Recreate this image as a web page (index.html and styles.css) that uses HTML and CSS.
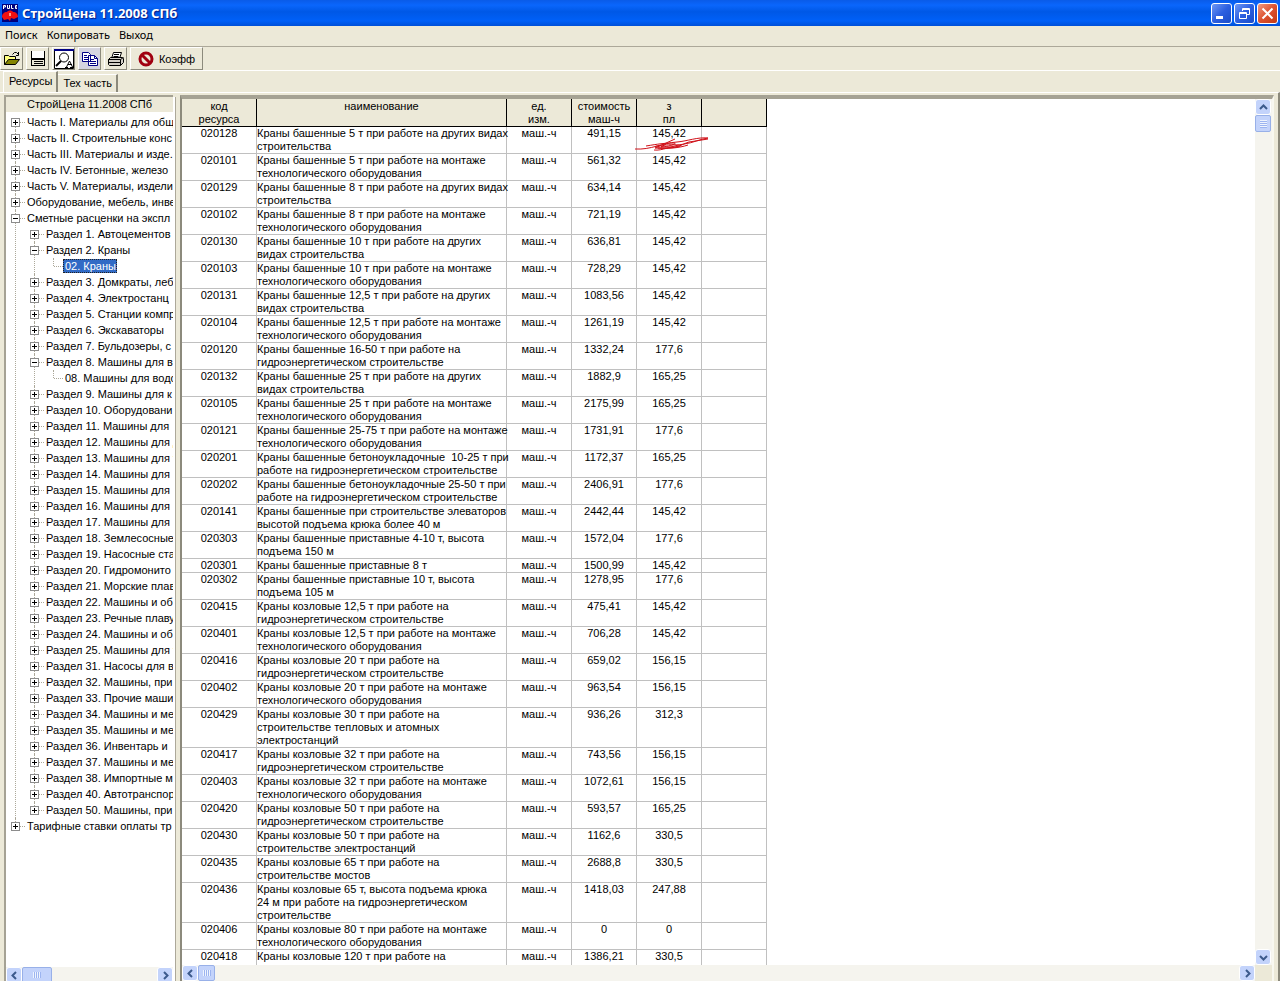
FILE: index.html
```html
<!DOCTYPE html>
<html lang="ru">
<head>
<meta charset="utf-8">
<title>СтройЦена 11.2008 СПб</title>
<link rel="stylesheet" href="styles.css">
</head>
<body>
<div class="window">
<header class="titlebar">
<svg class="logo" width="16" height="18" viewBox="0 0 16 18"><path fill="#00007c" d="M0 0h16v18H0z"/><path stroke="#fff" fill="none" d="M1.500 5V1.500h2V3h-2M5.500 1v3.500h2V1M9.500 1v3.500h2M15 1.500h-1.500v3H15M13 3h2"/><path fill="#f01010" d="M0 13c0-3 2-5 5-5 1-2 5-2 6 0 3 0 5 2 5 5l-4 2-3-1-1 3-2-2-4 1z"/><path fill="#ff9a80" d="M7 9h2v3H7z"/></svg>
<h1 class="title">СтройЦена 11.2008 СПб</h1>
<div class="caption-buttons">
<button class="cap" aria-label="Свернуть"><svg width="19" height="19" viewBox="0 0 19 19"><path fill="#fff" d="M4 12h7v3H4z"/></svg></button>
<button class="cap" aria-label="Восстановить"><svg width="19" height="19" viewBox="0 0 19 19"><path fill="none" stroke="#fff" d="M7.500 7V4.500h7v6H12M7 5.500h8M4.500 8.500h7v6h-7zM4 9.500h8"/></svg></button>
<button class="cap close" aria-label="Закрыть"><svg width="19" height="19" viewBox="0 0 19 19"><path stroke="#fff" stroke-width="2" d="M4.500 4.500l10 10M14.500 4.500l-10 10"/></svg></button>
</div>
</header>
<nav class="menubar"><button>Поиск</button><button>Копировать</button><button>Выход</button></nav>
<div class="toolbar">
<button class="tool" aria-label="Открыть"><svg width="18" height="16" viewBox="0 0 18 16"><path fill="#ffff80" stroke="#000" d="M1.500 13.500v-9h4l1 1h6v3"/><path fill="#848400" stroke="#000" d="M1.500 13.500l4-5h11l-4 5z"/><path fill="none" stroke="#000" d="M9.500 3.500l2-2h2l2 2M15.500 1v3.500H13"/></svg></button>
<button class="tool" aria-label="Сохранить"><svg width="16" height="16" viewBox="0 0 16 16"><path fill="#fff" d="M2 0h12v8H2z"/><path d="M1 0h1v15H1zM14 0h1v15h-1zM1 7h14v2H1zM4 10h9v1H4zM4 12h9v1H4zM1 14h14v1H1z"/></svg></button>
<button class="tool preview" aria-label="Просмотр"><svg width="20" height="20" viewBox="0 0 20 20"><path fill="#fff" stroke="#000" d="M.5.5h19v19H.5z"/><path fill="#000084" d="M0 0h20v2H0z"/><circle cx="10" cy="8.500" r="4.500" fill="#fff" stroke="#000"/><path stroke="#000" stroke-width="2" d="M7 12l-5 5"/><path fill="none" stroke="#000" d="M12.500 18l3-6 3 6M14 15.500h4M11 18.500h3M16 18.500h4"/></svg></button>
<button class="tool copy" aria-label="Копировать"><svg width="18" height="16" viewBox="0 0 18 16"><path fill="#fff" stroke="#000084" d="M1.500 1.500h6l2 2v7h-8zM7.500 4.500h6l3 3v7h-9z"/><path fill="none" stroke="#000084" d="M3 4.500h3M3 6.500h4M3 8.500h4M9 8.500h4M9 10.500h6M9 12.500h6M13.500 4.500v3h3"/></svg></button>
<button class="tool" aria-label="Печать"><svg width="18" height="16" viewBox="0 0 18 16"><path fill="#fff" stroke="#000" d="M4.500 7.500l2-6h8l-2 6"/><path fill="#d4d0c8" stroke="#000" d="M1.500 8.500l2-2h12l1 1v4l-3 3h-11l-1-1zM1.500 8.500h12v6M13.500 8.500l3-2M2 11.500h11M7 3.500h5M6.500 5.500h5"/></svg></button>
<button class="tool coeff"><svg width="16" height="16" viewBox="0 0 16 16"><circle cx="8" cy="8" r="6" fill="none" stroke="#a00010" stroke-width="3"/><path stroke="#a00010" stroke-width="3" d="M4 4l8 8"/></svg><span>Коэфф</span></button>
</div>
<div class="tabs" role="tablist"><button class="tab active" role="tab" aria-selected="true">Ресурсы</button><button class="tab" role="tab" aria-selected="false">Тех часть</button></div>
<main class="workspace">
<aside class="side">
<h2 class="side-head">СтройЦена 11.2008 СПб</h2>
<ul class="tree">
<li><i class="box plus"></i>Часть I. Материалы для общ</li>
<li><i class="box plus"></i>Часть II. Строительные конс</li>
<li><i class="box plus"></i>Часть III. Материалы и изде.</li>
<li><i class="box plus"></i>Часть IV. Бетонные, железо</li>
<li><i class="box plus"></i>Часть V. Материалы, издели</li>
<li><i class="box plus"></i>Оборудование, мебель, инве</li>
<li><i class="box"></i>Сметные расценки на экспл
<ul>
<li><i class="box plus"></i>Раздел 1. Автоцементов</li>
<li><i class="box"></i>Раздел 2. Краны
<ul class="leaf"><li><span class="selected">02. Краны</span></li></ul></li>
<li><i class="box plus"></i>Раздел 3. Домкраты, леб</li>
<li><i class="box plus"></i>Раздел 4. Электростанц</li>
<li><i class="box plus"></i>Раздел 5. Станции компр</li>
<li><i class="box plus"></i>Раздел 6. Экскаваторы</li>
<li><i class="box plus"></i>Раздел 7. Бульдозеры, с</li>
<li><i class="box"></i>Раздел 8. Машины для в
<ul class="leaf"><li>08. Машины для водо</li></ul></li>
<li><i class="box plus"></i>Раздел 9. Машины для к</li>
<li><i class="box plus"></i>Раздел 10. Оборудовани</li>
<li><i class="box plus"></i>Раздел 11. Машины для</li>
<li><i class="box plus"></i>Раздел 12. Машины для д</li>
<li><i class="box plus"></i>Раздел 13. Машины для т</li>
<li><i class="box plus"></i>Раздел 14. Машины для</li>
<li><i class="box plus"></i>Раздел 15. Машины для</li>
<li><i class="box plus"></i>Раздел 16. Машины для</li>
<li><i class="box plus"></i>Раздел 17. Машины для</li>
<li><i class="box plus"></i>Раздел 18. Землесосные</li>
<li><i class="box plus"></i>Раздел 19. Насосные ста</li>
<li><i class="box plus"></i>Раздел 20. Гидромонито</li>
<li><i class="box plus"></i>Раздел 21. Морские плав</li>
<li><i class="box plus"></i>Раздел 22. Машины и об</li>
<li><i class="box plus"></i>Раздел 23. Речные плаву</li>
<li><i class="box plus"></i>Раздел 24. Машины и об</li>
<li><i class="box plus"></i>Раздел 25. Машины для т</li>
<li><i class="box plus"></i>Раздел 31. Насосы для в</li>
<li><i class="box plus"></i>Раздел 32. Машины, при</li>
<li><i class="box plus"></i>Раздел 33. Прочие маши</li>
<li><i class="box plus"></i>Раздел 34. Машины и ме</li>
<li><i class="box plus"></i>Раздел 35. Машины и ме</li>
<li><i class="box plus"></i>Раздел 36. Инвентарь и</li>
<li><i class="box plus"></i>Раздел 37. Машины и ме</li>
<li><i class="box plus"></i>Раздел 38. Импортные м</li>
<li><i class="box plus"></i>Раздел 40. Автотранспор</li>
<li><i class="box plus"></i>Раздел 50. Машины, при</li>
</ul></li>
<li><i class="box plus"></i>Тарифные ставки оплаты тр</li>
</ul>
<div class="hscroll">
<button class="arrow" aria-label="Влево"><svg width="9" height="9" viewBox="0 0 9 9"><path d="M6 1L2.500 4.500 6 8"/></svg></button><span class="thumb wide"></span><span class="space"></span><button class="arrow" aria-label="Вправо"><svg width="9" height="9" viewBox="0 0 9 9"><path d="M3 1l3.500 3.500L3 8"/></svg></button>
</div>
</aside>
<div class="splitter"></div>
<section class="data">
<div class="view">
<div class="sheet">
<table class="grid">
<colgroup><col class="c-code"><col class="c-name"><col class="c-num"><col class="c-num"><col class="c-num"><col class="c-num"></colgroup>
<thead><tr><th>код<br>ресурса</th><th>наименование</th><th>ед.<br>изм.</th><th>стоимость<br>маш-ч</th><th>з<br>пл</th><th></th></tr></thead>
<tbody>
<tr><td>020128</td><td>Краны башенные 5 т при работе на других видах<br>строительства</td><td>маш.-ч</td><td>491,15</td><td class="marked">145,42<svg class="scribble" width="76" height="16" viewBox="0 0 76 16"><path d="M1 13c16 1 27-6 42-7 11-1 20-5 31-4-8 1-15 5-24 6-13 2-22 7-30 6M12 10c12-2 19-3 27-3s-8 5-16 4 14-3 22-2-11 4-21 3M41 3L21 12c13 1 24 0 33-3M32 8l-5 3h14c6-1 10-4 14-5L74 3"/></svg></td><td></td></tr>
<tr><td>020101</td><td>Краны башенные 5 т при работе на монтаже<br>технологического оборудования</td><td>маш.-ч</td><td>561,32</td><td>145,42</td><td></td></tr>
<tr><td>020129</td><td>Краны башенные 8 т при работе на других видах<br>строительства</td><td>маш.-ч</td><td>634,14</td><td>145,42</td><td></td></tr>
<tr><td>020102</td><td>Краны башенные 8 т при работе на монтаже<br>технологического оборудования</td><td>маш.-ч</td><td>721,19</td><td>145,42</td><td></td></tr>
<tr><td>020130</td><td>Краны башенные 10 т при работе на других<br>видах строительства</td><td>маш.-ч</td><td>636,81</td><td>145,42</td><td></td></tr>
<tr><td>020103</td><td>Краны башенные 10 т при работе на монтаже<br>технологического оборудования</td><td>маш.-ч</td><td>728,29</td><td>145,42</td><td></td></tr>
<tr><td>020131</td><td>Краны башенные 12,5 т при работе на других<br>видах строительства</td><td>маш.-ч</td><td>1083,56</td><td>145,42</td><td></td></tr>
<tr><td>020104</td><td>Краны башенные 12,5 т при работе на монтаже<br>технологического оборудования</td><td>маш.-ч</td><td>1261,19</td><td>145,42</td><td></td></tr>
<tr><td>020120</td><td>Краны башенные 16-50 т при работе на<br>гидроэнергетическом строительстве</td><td>маш.-ч</td><td>1332,24</td><td>177,6</td><td></td></tr>
<tr><td>020132</td><td>Краны башенные 25 т при работе на других<br>видах строительства</td><td>маш.-ч</td><td>1882,9</td><td>165,25</td><td></td></tr>
<tr><td>020105</td><td>Краны башенные 25 т при работе на монтаже<br>технологического оборудования</td><td>маш.-ч</td><td>2175,99</td><td>165,25</td><td></td></tr>
<tr><td>020121</td><td>Краны башенные 25-75 т при работе на монтаже<br>технологического оборудования</td><td>маш.-ч</td><td>1731,91</td><td>177,6</td><td></td></tr>
<tr><td>020201</td><td>Краны башенные бетоноукладочные&nbsp; 10-25 т при<br>работе на гидроэнергетическом строительстве</td><td>маш.-ч</td><td>1172,37</td><td>165,25</td><td></td></tr>
<tr><td>020202</td><td>Краны башенные бетоноукладочные 25-50 т при<br>работе на гидроэнергетическом строительстве</td><td>маш.-ч</td><td>2406,91</td><td>177,6</td><td></td></tr>
<tr><td>020141</td><td>Краны башенные при строительстве элеваторов<br>высотой подъема крюка более 40 м</td><td>маш.-ч</td><td>2442,44</td><td>145,42</td><td></td></tr>
<tr><td>020303</td><td>Краны башенные приставные 4-10 т, высота<br>подъема 150 м</td><td>маш.-ч</td><td>1572,04</td><td>177,6</td><td></td></tr>
<tr><td>020301</td><td>Краны башенные приставные 8 т</td><td>маш.-ч</td><td>1500,99</td><td>145,42</td><td></td></tr>
<tr><td>020302</td><td>Краны башенные приставные 10 т, высота<br>подъема 105 м</td><td>маш.-ч</td><td>1278,95</td><td>177,6</td><td></td></tr>
<tr><td>020415</td><td>Краны козловые 12,5 т при работе на<br>гидроэнергетическом строительстве</td><td>маш.-ч</td><td>475,41</td><td>145,42</td><td></td></tr>
<tr><td>020401</td><td>Краны козловые 12,5 т при работе на монтаже<br>технологического оборудования</td><td>маш.-ч</td><td>706,28</td><td>145,42</td><td></td></tr>
<tr><td>020416</td><td>Краны козловые 20 т при работе на<br>гидроэнергетическом строительстве</td><td>маш.-ч</td><td>659,02</td><td>156,15</td><td></td></tr>
<tr><td>020402</td><td>Краны козловые 20 т при работе на монтаже<br>технологического оборудования</td><td>маш.-ч</td><td>963,54</td><td>156,15</td><td></td></tr>
<tr><td>020429</td><td>Краны козловые 30 т при работе на<br>строительстве тепловых и атомных<br>электростанций</td><td>маш.-ч</td><td>936,26</td><td>312,3</td><td></td></tr>
<tr><td>020417</td><td>Краны козловые 32 т при работе на<br>гидроэнергетическом строительстве</td><td>маш.-ч</td><td>743,56</td><td>156,15</td><td></td></tr>
<tr><td>020403</td><td>Краны козловые 32 т при работе на монтаже<br>технологического оборудования</td><td>маш.-ч</td><td>1072,61</td><td>156,15</td><td></td></tr>
<tr><td>020420</td><td>Краны козловые 50 т при работе на<br>гидроэнергетическом строительстве</td><td>маш.-ч</td><td>593,57</td><td>165,25</td><td></td></tr>
<tr><td>020430</td><td>Краны козловые 50 т при работе на<br>строительстве электростанций</td><td>маш.-ч</td><td>1162,6</td><td>330,5</td><td></td></tr>
<tr><td>020435</td><td>Краны козловые 65 т при работе на<br>строительстве мостов</td><td>маш.-ч</td><td>2688,8</td><td>330,5</td><td></td></tr>
<tr><td>020436</td><td>Краны козловые 65 т, высота подъема крюка<br>24 м при работе на гидроэнергетическом<br>строительстве</td><td>маш.-ч</td><td>1418,03</td><td>247,88</td><td></td></tr>
<tr><td>020406</td><td>Краны козловые 80 т при работе на монтаже<br>технологического оборудования</td><td>маш.-ч</td><td>0</td><td>0</td><td></td></tr>
<tr><td>020418</td><td>Краны козловые 120 т при работе на<br>&nbsp;</td><td>маш.-ч</td><td>1386,21</td><td>330,5</td><td></td></tr>
</tbody>
</table>
</div>
<div class="vscroll">
<button class="arrow" aria-label="Вверх"><svg width="9" height="9" viewBox="0 0 9 9"><path d="M1 6l3.500-3.500L8 6"/></svg></button><span class="thumb tall"></span><span class="space"></span><button class="arrow" aria-label="Вниз"><svg width="9" height="9" viewBox="0 0 9 9"><path d="M1 3l3.500 3.500L8 3"/></svg></button>
</div>
</div>
<div class="hscroll bottom">
<button class="arrow" aria-label="Влево"><svg width="9" height="9" viewBox="0 0 9 9"><path d="M6 1L2.500 4.500 6 8"/></svg></button><span class="thumb"></span><span class="space"></span><button class="arrow" aria-label="Вправо"><svg width="9" height="9" viewBox="0 0 9 9"><path d="M3 1l3.500 3.500L3 8"/></svg></button><span class="corner"></span>
</div>
</section>
</main>
</div>
</body>
</html>
```

FILE: styles.css
```css
* { box-sizing: border-box; }
body { margin: 0; font: 11px/13px "Liberation Sans", Arial, sans-serif; color: #000; background: #ece9d8; }
button { font: inherit; color: inherit; padding: 0; border: 0; background: none; }
h1, h2, ul { margin: 0; padding: 0; }
.window { height: 100vh; display: flex; flex-direction: column; overflow: hidden; }

.titlebar { flex: none; height: 26px; display: flex; align-items: center; padding: 0 2px; background: linear-gradient(#0a5be8 0, #0a66fc 20%, #0058e6 45%, #0060f8 80%, #0050d8 100%); }
.logo { margin-right: 4px; }
.title { flex: 1; font: bold 13px/20px "Noto Sans", sans-serif; color: #fff; text-shadow: 1px 1px 1px #0a1883; }
.caption-buttons { display: flex; gap: 2px; }
.cap { width: 21px; height: 21px; border: 1px solid #fff; border-radius: 3px; background: linear-gradient(135deg, #6f98f5, #2c5fe0 50%, #1a4cc8); }
.cap svg { display: block; }
.cap.close { background: linear-gradient(135deg, #f09a80, #dd5230 50%, #c23a14); }

.menubar { flex: none; height: 20px; display: flex; gap: 9px; padding: 0 5px 3px; font-family: "Noto Sans", sans-serif; }
.toolbar { flex: none; height: 25px; display: flex; gap: 3px; border-top: 1px solid #aca899; border-bottom: 1px solid #fff; }
.tool { width: 23px; display: flex; align-items: center; justify-content: center; border: 1px solid; border-color: #fff #8c8a7c #8c8a7c #fff; }
.tool svg { flex: none; }
.copy { background: #d4d4e0; }
.coeff { width: 73px; gap: 5px; padding-top: 1px; }

.tabs { flex: none; height: 21px; display: flex; align-items: flex-end; padding-left: 3px; }
.tab { height: 18px; padding: 0 4px 0 5px; border-right: 2px solid #8c8a7c; border-top: 1px solid #fff; }
.tab.active { height: 21px; border-left: 1px solid #fff; padding-bottom: 1px; }

.workspace { flex: 1; min-height: 0; display: flex; border-top: 1px solid #fff; border-right: 2px solid #8c8a7c; padding: 2px 4px 0 4px; }
.side { width: 169px; display: flex; flex-direction: column; border: 2px solid #a5a294; border-right: 0; border-bottom: 0; background: #fff; overflow: hidden; }
.side-head { flex: none; height: 15px; background: #ece9d8; text-align: center; font-size: 11px; font-weight: normal; line-height: 15px; }
.splitter { width: 7px; margin-top: 2px; border-left: 2px solid #fff; border-right: 3px solid #ece9d8; background: #aca899 content-box; padding-right: 1px; }
.tree { flex: 1; min-height: 0; overflow: hidden; margin-top: 2px; }
.tree, .tree ul { list-style: none; }
.tree li { line-height: 16px; padding-left: 21px; white-space: nowrap; position: relative; }
.tree ul { margin-left: -2px; }
.tree li::before { content: ""; position: absolute; left: 9px; top: 0; bottom: 0; border-left: 1px dotted #aca899; }
.tree li:first-child::before { top: 8px; }
.tree li:last-child::before { bottom: auto; height: 8px; }
.tree li:first-child:last-child::before { top: 0; }
.tree li::after { content: ""; position: absolute; left: 10px; top: 8px; width: 9px; border-top: 1px dotted #aca899; }
.box { position: absolute; z-index: 1; left: 5px; top: 4px; width: 9px; height: 9px; border: 1px solid #8c8c8c; background: linear-gradient(#000, #000) center / 5px 1px no-repeat #fff; }
.plus { background: linear-gradient(#000, #000) center / 5px 1px no-repeat, linear-gradient(#000, #000) center / 1px 5px no-repeat, #fff; }
.selected { display: inline-block; line-height: 14px; margin-left: -2px; padding: 0 1px 0 2px; background: #316ac5; color: #fff; outline: 1px dotted #222; outline-offset: -1px; }

.data { flex: 1; min-width: 0; display: flex; flex-direction: column; border: 2px solid #8c8a7c; border-top: 4px solid #a5a294; border-right: 2px solid #f8f8f0; border-bottom: 0; background: #fff; }
.view { flex: 1; min-height: 0; display: flex; }
.sheet { flex: 1; min-width: 0; overflow: hidden; }
.grid { table-layout: fixed; width: 585px; border-collapse: separate; border-spacing: 0; white-space: nowrap; }
.c-code { width: 75px; }
.c-name { width: 250px; }
.c-num { width: 65px; }
.grid th, .grid td { padding: 0; text-align: center; vertical-align: top; font-weight: normal; border-right: 1px solid #c0c0c0; border-bottom: 1px solid #c0c0c0; }
.grid th { height: 28px; padding-top: 1px; background: #ece9d8; border-color: #000; }
.grid td:nth-child(2) { text-align: left; }
.marked { position: relative; }
.scribble { position: absolute; z-index: 1; left: -3px; top: 9px; fill: none; stroke: #d01018; stroke-width: 1; }

.hscroll { flex: none; height: 14px; display: flex; overflow: hidden; background: #f5f4ee; }
.bottom { height: 16px; }
.corner { width: 17px; background: #ece9d8; }
.vscroll { width: 17px; display: flex; flex-direction: column; background: #f5f4ee; }
.space { flex: 1; }
.arrow { flex: none; width: 16px; height: 16px; display: flex; align-items: center; justify-content: center; border: 1px solid #fff; border-radius: 3px; background: #c3d3fb; }
.arrow path { fill: none; stroke: #3c5a8c; stroke-width: 2; }
.thumb { width: 17px; height: 16px; border: 1px solid #98b0e8; border-radius: 2px; background: repeating-linear-gradient(90deg, #eef4fe 0 1px, #9cb4f0 1px 2px) center / 8px 6px no-repeat #c3d3fb; }
.wide { width: 30px; }
.tall { width: 16px; height: 17px; background-image: repeating-linear-gradient(#eef4fe 0 1px, #9cb4f0 1px 2px); background-size: 7px 8px; }
```
